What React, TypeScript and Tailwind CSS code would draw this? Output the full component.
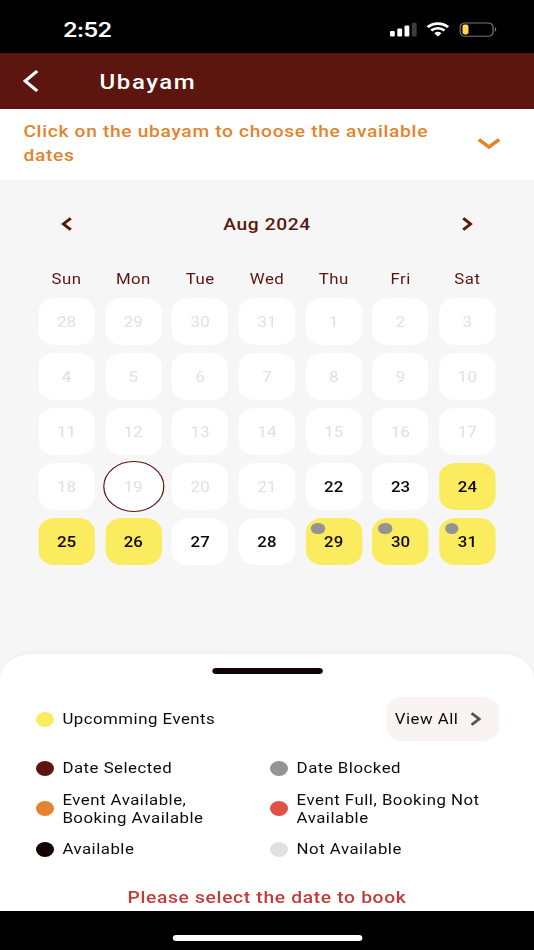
import { useState } from "react";

type Day = {
  date: number;
  state: "off" | "open" | "event";
  blocked?: boolean;
};

const WEEKDAYS = ["Sun", "Mon", "Tue", "Wed", "Thu", "Fri", "Sat"];

const DAYS: Day[] = Array.from({ length: 35 }, (_, i) => {
  const date = i < 4 ? 28 + i : i - 3;
  if (i < 25) return { date, state: "off" };
  const event = date >= 24 && date !== 27 && date !== 28;
  return { date, state: event ? "event" : "open", blocked: date >= 29 };
});

const TODAY_INDEX = 22;

const DAY_STYLES = {
  off: "bg-white text-[#e0e0e0]",
  open: "bg-white text-[#120a0a] font-medium",
  event: "bg-[#fbeb5f] text-[#120a0a] font-medium",
};

function Chevron({ className, points, viewBox, width }: { className: string; points: string; viewBox: string; width: number }) {
  return (
    <svg className={className} viewBox={viewBox} fill="none" stroke="currentColor" strokeWidth={width}>
      <polyline points={points} />
    </svg>
  );
}

function StatusBar() {
  return (
    <div className="flex h-[53px] items-start justify-between bg-black pl-[52.5px] pr-[31px] text-white">
      <span className="mt-[18px] font-['Inter'] text-[19.5px] leading-6 font-semibold tracking-[-0.6px]">2:52</span>
      <svg className="mt-[22px] h-[15px] w-[89px]" viewBox="0 0 89 15" fill="none">
        <rect x="0" y="9" width="4" height="5.5" rx="1" fill="#fff" />
        <rect x="6.1" y="6.5" width="4" height="8" rx="1" fill="#fff" />
        <rect x="12.1" y="3.5" width="4" height="11" rx="1" fill="#fff" />
        <rect x="18.2" y="0.7" width="4" height="13.8" rx="1" fill="#3d3d3d" />
        <path d="M31.4 5.1a12.2 12.2 0 0 1 17 0" stroke="#fff" strokeWidth="2.7" />
        <path d="M34.4 8.5a8 8 0 0 1 11 0" stroke="#fff" strokeWidth="2.5" />
        <path d="M36.9 11.2a4.4 4.4 0 0 1 6 0l-3 3.2z" fill="#fff" />
        <rect x="58.5" y="0.9" width="27.4" height="13.3" rx="4" stroke="#777" strokeWidth="1" />
        <rect x="60.4" y="2.6" width="5" height="9.8" rx="1.8" fill="#fcd84a" />
        <path d="M87.4 5.3c1.6.7 1.6 3.8 0 4.5z" fill="#777" />
      </svg>
    </div>
  );
}

function LegendItem({ color, children }: { color: string; children: React.ReactNode }) {
  return (
    <div className="flex items-center gap-[6.8px]">
      <span className={`size-[15px] shrink-0 rounded-full ${color}`} />
      <span>{children}</span>
    </div>
  );
}

export default function App() {
  const [open, setOpen] = useState(false);

  return (
    <div className="h-[950px] w-[534px] overflow-hidden">
      <main className="flex h-[950px] w-[445px] origin-top-left scale-x-120 flex-col bg-[#f6f6f6] font-['Roboto',sans-serif] text-[#120a0a]">
        <StatusBar />

        <header className="flex h-14 items-center bg-[#5d150f] pl-[19px] text-white">
          <Chevron className="h-6 w-[13px]" viewBox="0 0 13 24" points="12,2 2,12 12,22" width={2.9} />
          <h1 className="mt-px ml-[51px] text-[20px] font-medium tracking-[1.3px]">Ubayam</h1>
        </header>

        <button
          onClick={() => setOpen(!open)}
          className="flex h-[71px] items-center justify-between bg-white pr-7 pl-[19.5px] text-left text-[#e0852e]"
        >
          <span className="-mt-0.5 text-[16px] leading-6 font-medium tracking-[0.56px]">
            Click on the ubayam to choose the available
            <br />
            dates
          </span>
          <Chevron className="h-[13px] w-[19px]" viewBox="0 0 19 13" points="1,1.5 9.5,9 18,1.5" width={3.3} />
        </button>

        <section className="flex h-[474px] flex-col px-8">
          <div className="mt-8 flex h-6 items-center justify-between px-[19px] text-[#5d150f]">
            <Chevron className="h-[14px] w-[9px]" viewBox="0 0 9 14" points="8,1.2 1.8,7 8,12.8" width={2.6} />
            <h2 className="mt-0.5 text-[16px] font-medium tracking-[0.5px]">Aug 2024</h2>
            <Chevron className="h-[14px] w-[9px]" viewBox="0 0 9 14" points="1,1.2 7.2,7 1,12.8" width={2.6} />
          </div>

          <div className="mt-[33px] grid grid-cols-7 gap-x-[8.7px] text-center text-[14px] leading-5 tracking-[0.4px] text-[#5d150f]">
            {WEEKDAYS.map((d) => (
              <span key={d}>{d}</span>
            ))}
          </div>

          <div className="mt-[9px] grid grid-cols-7 gap-x-[8.7px] gap-y-[8.6px] text-[14px] tracking-[0.1px]">
            {DAYS.map((day, i) => (
              <div
                key={i}
                className={`relative flex h-[46.5px] items-center justify-center pt-[1.5px] ${
                  i === TODAY_INDEX
                    ? "-mx-[1.9px] -my-[2px] h-[50.5px] rounded-full border border-[#5d150f]"
                    : "rounded-[14px]"
                } ${DAY_STYLES[day.state]}`}
              >
                {day.date}
                {day.blocked && (
                  <span className="absolute top-[4.5px] left-[4.8px] size-[11.5px] rounded-full bg-[#959393]" />
                )}
              </div>
            ))}
          </div>
        </section>

        <section className="flex h-[257px] flex-col rounded-t-[26px] bg-white text-[14px] leading-[18px] tracking-[0.42px] shadow-[0_-1px_4px_rgba(0,0,0,0.04)]">
          <div className="mt-3.5 h-1.5 w-[92px] self-center rounded-full bg-[#120303]" />

          <div className="mt-[23px] flex h-[44px] items-center justify-between pr-[29px] pl-[30.2px]">
            <LegendItem color="bg-[#fbeb5f]">Upcomming Events</LegendItem>
            <button className="flex h-[44px] w-[94px] items-center rounded-[14px] bg-[#f9f4f2] pl-[7px]">
              View All
              <Chevron className="ml-[9.5px] h-[14px] w-[9px] text-[#555]" viewBox="0 0 9 14" points="1,1.2 7.4,7 1,12.8" width={2.5} />
            </button>
          </div>

          <div className="mt-[18px] grid grid-cols-[195.2px_auto] gap-y-[13.5px] pl-[30.2px]">
            <LegendItem color="bg-[#5d150f]">Date Selected</LegendItem>
            <LegendItem color="bg-[#959393]">Date Blocked</LegendItem>
            <LegendItem color="bg-[#e5832f]">
              Event Available,
              <br />
              Booking Available
            </LegendItem>
            <LegendItem color="bg-[#df5245]">
              Event Full, Booking Not
              <br />
              Available
            </LegendItem>
            <LegendItem color="bg-[#120303]">Available</LegendItem>
            <LegendItem color="bg-[#e0e0e0]">Not Available</LegendItem>
          </div>

          <p className="mt-[28px] text-center text-[16px] leading-6 font-medium tracking-[0.57px] text-[#c23b3b]">
            Please select the date to book
          </p>
        </section>

        <footer className="flex h-[39px] justify-center bg-black pt-6">
          <div className="h-1.5 w-[158px] rounded-full bg-white" />
        </footer>
      </main>
    </div>
  );
}
